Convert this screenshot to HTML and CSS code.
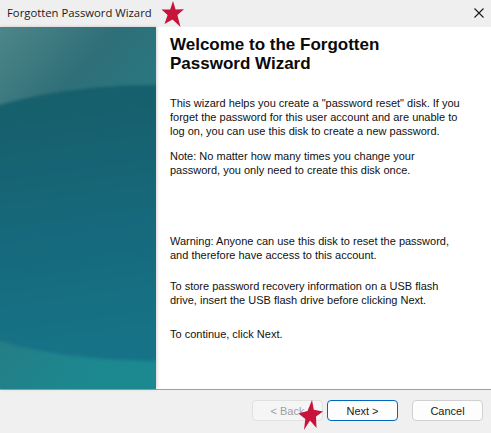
FILE: index.html
```html
<!DOCTYPE html>
<html>
<head>
<meta charset="utf-8">
<link rel="stylesheet" href="styles.css">
</head>
<body>
<div class="window">
  <div class="titlebar">
    <span class="title">Forgotten Password Wizard</span>
    <svg class="close" width="10" height="10" viewBox="0 0 10 10"><path d="M0.5 0.5L9.5 9.5M9.5 0.5L0.5 9.5" stroke="#1a1a1a" stroke-width="1.1"/></svg>
  </div>
  <div class="main">
    <div class="side">
      <svg width="156" height="362" viewBox="0 0 156 362" preserveAspectRatio="none">
        <defs>
          <linearGradient id="bg" x1="0" y1="0" x2="0.5" y2="1">
            <stop offset="0" stop-color="#4e8689"/>
            <stop offset="0.3" stop-color="#2f6f78"/>
            <stop offset="1" stop-color="#1c8890"/>
          </linearGradient>
          <linearGradient id="el" x1="0" y1="0" x2="0.3" y2="1">
            <stop offset="0" stop-color="#115b67"/>
            <stop offset="0.5" stop-color="#136778"/>
            <stop offset="1" stop-color="#177387"/>
          </linearGradient>
          <filter id="blur"><feGaussianBlur stdDeviation="1.5"/></filter>
        </defs>
        <rect width="156" height="362" fill="url(#bg)"/>
        <ellipse cx="150" cy="196" rx="290" ry="138" fill="url(#el)" filter="url(#blur)"/>
      </svg>
    </div>
    <div class="content">
      <h1>Welcome to the Forgotten<br>Password Wizard</h1>
      <p class="p1">This wizard helps you create a "password reset" disk. If you<br>forget the password for this user account and are unable to<br>log on, you can use this disk to create a new password.</p>
      <p class="p2">Note: No matter how many times you change your<br>password, you only need to create this disk once.</p>
      <p class="p3">Warning: Anyone can use this disk to reset the password,<br>and therefore have access to this account.</p>
      <p class="p4">To store password recovery information on a USB flash<br>drive, insert the USB flash drive before clicking Next.</p>
      <p class="p5">To continue, click Next.</p>
    </div>
  </div>
  <div class="footer">
    <button class="btn disabled">&lt; Back</button>
    <button class="btn primary">Next &gt;</button>
    <button class="btn cancel">Cancel</button>
  </div>
</div>
<svg class="star star1" width="24" height="28" viewBox="0 0 24 28"><polygon points="12,1 14.6,9.6 23,9.2 16.4,15 19.5,27 11.5,19.5 3.5,24 6.6,15 0.5,9.4 9.2,9.6" fill="#c8133a"/></svg>
<svg class="star star2" width="26" height="32" viewBox="0 0 26 32"><polygon points="14,1 15.8,10.8 25,12.6 18,17.6 18.5,29 12,21.5 6,31 7.3,20 0.5,14.5 9.5,12" fill="#c8133a"/></svg>
</body>
</html>
```
FILE: styles.css
```css
html, body {
  margin: 0;
  padding: 0;
}
body {
  width: 491px;
  height: 433px;
  overflow: hidden;
  position: relative;
  background: #f0f0f0;
  font-family: "Liberation Sans", Arial, sans-serif;
}
.window {
  display: flex;
  flex-direction: column;
  height: 433px;
}
.titlebar {
  height: 27px;
  flex: none;
  display: flex;
  align-items: center;
  justify-content: space-between;
  padding: 0 7px 0 7px;
  background: #efefef;
}
.title {
  font-family: "Open Sans", "Noto Sans", sans-serif;
  font-size: 11.3px;
  color: #1b1b1b;
  margin-top: -2px;
}
.close {
  margin-top: -2px;
}
.main {
  height: 362px;
  flex: none;
  display: flex;
  background: #fff;
  border-bottom: 1px solid #a0a0a0;
}
.side {
  width: 156px;
  flex: none;
  height: 362px;
  box-shadow: 1px 0 3px rgba(0,0,0,0.18);
  position: relative;
  z-index: 1;
}
.side svg {
  display: block;
}
.content {
  flex: 1;
  padding: 8px 10px 0 14px;
  color: #111;
  white-space: nowrap;
}
h1 {
  margin: 0;
  font-size: 17px;
  font-weight: bold;
  line-height: 19px;
  color: #0a0a0a;
}
p {
  margin: 0;
  font-size: 11px;
  line-height: 14px;
}
.p1 { margin-top: 23px; }
.p2 { margin-top: 11px; }
.p3 { margin-top: 57px; }
.p4 { margin-top: 17px; }
.p5 { margin-top: 20px; }
.footer {
  flex: 1;
  display: flex;
  align-items: center;
  justify-content: flex-end;
  padding: 0 8px 2px 0;
  background: #f0f0f0;
}
.btn {
  width: 71px;
  height: 21px;
  box-sizing: border-box;
  border: 1px solid #d0d0d0;
  border-radius: 4px;
  background: #fdfdfd;
  font-family: "Liberation Sans", Arial, sans-serif;
  font-size: 11px;
  color: #1a1a1a;
  padding: 0;
}
.disabled {
  color: #a0a0a0;
  background: #f5f5f5;
  border-color: #e0e0e0;
}
.primary {
  margin-left: 4px;
  border-color: #0067c0;
}
.cancel {
  margin-left: 14px;
}
.star {
  position: absolute;
}
.star1 {
  left: 161px;
  top: 0px;
}
.star2 {
  left: 298px;
  top: 399px;
}
```
